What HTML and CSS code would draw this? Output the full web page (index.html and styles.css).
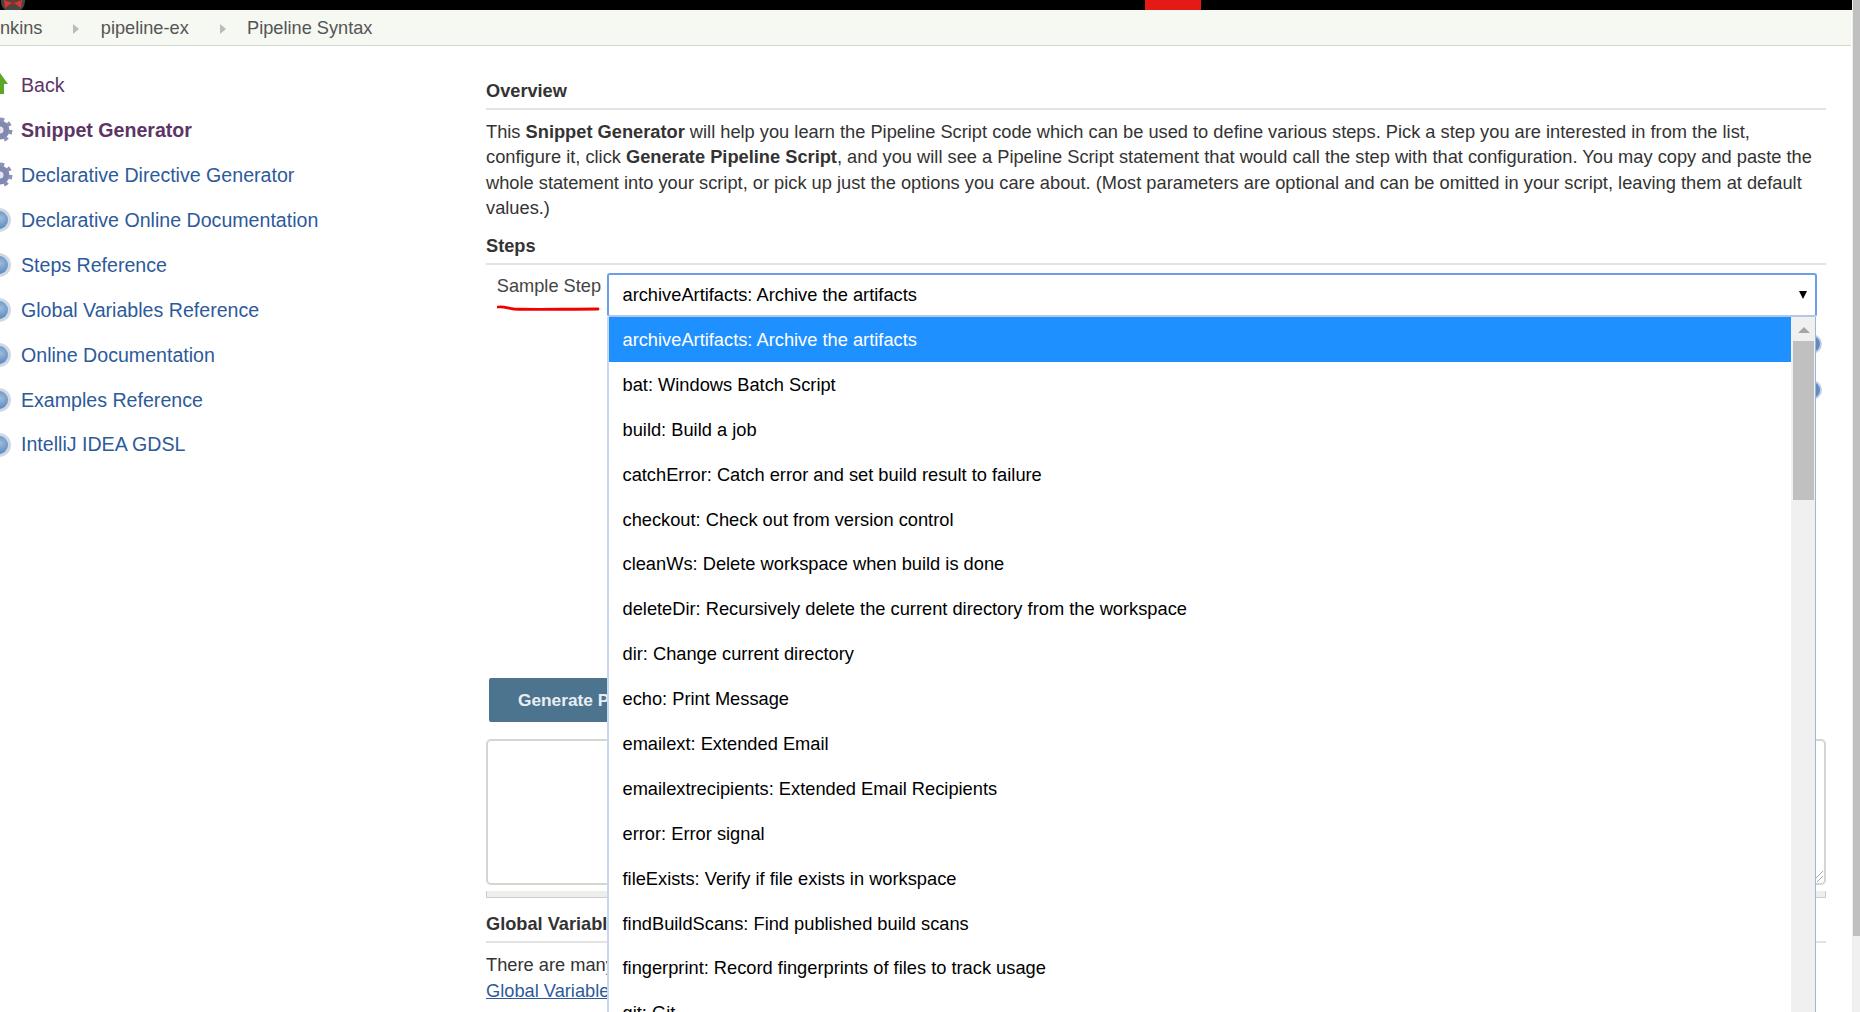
FILE: index.html
```html
<!DOCTYPE html>
<html lang="en">
<head>
<meta charset="utf-8">
<title>Pipeline Syntax</title>
<link rel="stylesheet" href="styles.css">
</head>
<body>
<div class="page">
  <header class="topbar">
    <svg class="logo" width="28" height="10" viewBox="0 0 28 10"><circle cx="13" cy="1" r="12" fill="#4a4544"/><path d="M4 0l8 3-7 5zM22 0l-8 3 7 5z" fill="#d33833"/><circle cx="13" cy="3" r="2" fill="#a82520"/></svg>
    <div class="alert"></div>
  </header>
  <nav class="crumbs">
    <span class="crumb">nkins</span><span class="arrow"></span>
    <span class="crumb">pipeline-ex</span><span class="arrow"></span>
    <span class="crumb">Pipeline Syntax</span>
  </nav>
  <div class="main">
    <aside class="side">
      <a class="task visited"><svg class="ico" viewBox="0 0 13 26" width="13" height="26"><path d="M-8 12L0 1l8 11H4v10H-4V12z" fill="#5aa823"/></svg>Back</a>
      <a class="task visited strong"><svg class="ico" viewBox="0 0 13 26" width="13" height="26"><use href="#gear"/></svg>Snippet Generator</a>
      <a class="task"><svg class="ico" viewBox="0 0 13 26" width="13" height="26"><use href="#gear"/></svg>Declarative Directive Generator</a>
      <a class="task"><svg class="ico" viewBox="0 0 13 26" width="13" height="26"><use href="#help"/></svg>Declarative Online Documentation</a>
      <a class="task"><svg class="ico" viewBox="0 0 13 26" width="13" height="26"><use href="#help"/></svg>Steps Reference</a>
      <a class="task"><svg class="ico" viewBox="0 0 13 26" width="13" height="26"><use href="#help"/></svg>Global Variables Reference</a>
      <a class="task"><svg class="ico" viewBox="0 0 13 26" width="13" height="26"><use href="#help"/></svg>Online Documentation</a>
      <a class="task"><svg class="ico" viewBox="0 0 13 26" width="13" height="26"><use href="#help"/></svg>Examples Reference</a>
      <a class="task"><svg class="ico" viewBox="0 0 13 26" width="13" height="26"><use href="#help"/></svg>IntelliJ IDEA GDSL</a>
    </aside>
    <main class="content">
      <h2 class="sec">Overview</h2>
      <p class="para intro">This <b>Snippet Generator</b> will help you learn the Pipeline Script code which can be used to define various steps. Pick a step you are interested in from the list, configure it, click <b>Generate Pipeline Script</b>, and you will see a Pipeline Script statement that would call the step with that configuration. You may copy and paste the whole statement into your script, or pick up just the options you care about. (Most parameters are optional and can be omitted in your script, leaving them at default values.)</p>
      <h2 class="sec">Steps</h2>
      <div class="step-row">
        <label class="step-label">Sample Step</label>
        <div class="select"><span>archiveArtifacts: Archive the artifacts</span><span class="caret"></span></div>
      </div>
      <div class="gen-wrap"><button class="gen">Generate Pipeline Script</button></div>
      <div class="output">
        <svg class="resizer" width="12" height="12" viewBox="0 0 12 12"><path d="M0 11L11 0M5 11l6-6" stroke="#aaa" stroke-width="1" fill="none"/></svg>
      </div>
      <div class="output-bar"></div>
      <h2 class="sec global">Global Variables</h2>
      <p class="para">There are many features of the Pipeline that are not steps.<br><a class="link">Global Variables Reference</a></p>
      <span class="help h1"></span>
      <span class="help h2"></span>
      <div class="dropdown">
        <ul class="options">
          <li class="opt on">archiveArtifacts: Archive the artifacts</li>
          <li class="opt">bat: Windows Batch Script</li>
          <li class="opt">build: Build a job</li>
          <li class="opt">catchError: Catch error and set build result to failure</li>
          <li class="opt">checkout: Check out from version control</li>
          <li class="opt">cleanWs: Delete workspace when build is done</li>
          <li class="opt">deleteDir: Recursively delete the current directory from the workspace</li>
          <li class="opt">dir: Change current directory</li>
          <li class="opt">echo: Print Message</li>
          <li class="opt">emailext: Extended Email</li>
          <li class="opt">emailextrecipients: Extended Email Recipients</li>
          <li class="opt">error: Error signal</li>
          <li class="opt">fileExists: Verify if file exists in workspace</li>
          <li class="opt">findBuildScans: Find published build scans</li>
          <li class="opt">fingerprint: Record fingerprints of files to track usage</li>
          <li class="opt">git: Git</li>
        </ul>
        <div class="drop-scroll"><span class="up"></span><span class="drop-thumb"></span></div>
      </div>
      <svg class="scribble" width="104" height="8" viewBox="0 0 104 8"><path d="M1 2c5-1 9 1 16 2 20 1 50 0 84 0" fill="none" stroke="#f00000" stroke-width="2.8" stroke-linecap="round"/></svg>
    </main>
  </div>
  <div class="page-scroll"><span class="page-thumb"></span></div>
</div>
<svg class="defs" width="0" height="0">
  <defs>
    <radialGradient id="blue" cx="0.6" cy="0.4" r="0.7"><stop offset="0" stop-color="#9dbbdc"/><stop offset="1" stop-color="#4f80b8"/></radialGradient>
    <g id="gear"><circle cx="0" cy="13" r="9.5" fill="#8289b0"/><circle cx="0" cy="13" r="10.5" fill="none" stroke="#8c92b6" stroke-width="4" stroke-dasharray="4.1 4.1"/><circle cx="0" cy="13" r="3.5" fill="#e4e5ef"/></g>
    <g id="help"><circle cx="-1" cy="13" r="12" fill="#cfd8e4"/><circle cx="-1" cy="13" r="9" fill="url(#blue)"/></g>
  </defs>
</svg>
</body>
</html>
```
FILE: styles.css
```css
* { box-sizing: border-box; }
html, body { margin: 0; padding: 0; height: 100%; overflow: hidden; background: #fff; }
body { font-family: "Liberation Sans", Arial, sans-serif; font-size: 18.2px; color: #333; }
.defs { position: absolute; }
.page { position: relative; width: 1860px; height: 1012px; overflow: hidden; }
.topbar { height: 10px; background: #000; display: flex; position: relative; overflow: hidden; }
.logo { flex: none; }
.alert { position: absolute; left: 1145px; top: 0; width: 56px; height: 10px; background: #e51a17; }
.crumbs { height: 36px; background: #f6f8f2; border-bottom: 1px solid #d3d7cf; display: flex; align-items: center; color: #555; font-size: 18.2px; margin-right: 9px; padding-top: 2px; }
.arrow { width: 0; height: 0; border-left: 6px solid #bbb; border-top: 5.5px solid transparent; border-bottom: 5.5px solid transparent; margin: 0 21.3px 0 31px; }
.main { display: flex; }
.side { width: 486px; flex: none; padding-top: 17px; display: flex; flex-direction: column; }
.task { height: 44.95px; display: flex; align-items: center; gap: 8px; color: #2d5a9a; font-size: 19.6px; }
.task.visited { color: #5c3566; }
.task.strong { font-weight: 700; }
.ico { flex: none; }
.content { width: 1340px; padding-top: 32px; position: relative; flex: none; }
.sec { margin: 0; font-size: 18.2px; line-height: 26px; font-weight: 700; color: #333; border-bottom: 2px solid #e3e3e3; padding-bottom: 4px; }
.para { margin: 9.2px 0 0; font-size: 18.25px; line-height: 25.3px; color: #333; }
.para.intro { padding-right: 12px; }
.para + .sec { margin-top: 12.8px; }
.step-row { display: flex; margin-top: 8px; }
.step-label { width: 121px; padding: 3px 6px 0 0; text-align: right; font-size: 18.2px; line-height: 21px; color: #444; white-space: nowrap; flex: none; }
.select { width: 1210px; height: 44px; border: 2px solid #6d9eeb; border-bottom-color: #b5c6e2; border-radius: 3px; display: flex; align-items: center; justify-content: space-between; padding: 0 8px 0 13.5px; color: #000; font-size: 18.28px; background: #fff; }
.caret { width: 0; height: 0; border-left: 4.5px solid transparent; border-right: 4.5px solid transparent; border-top: 8px solid #000; }
.gen-wrap { margin-top: 361px; padding-left: 3px; }
.gen { width: 250px; height: 44px; background: #4d748f; border: 0; border-radius: 2px; color: #e8eef2; font: 700 17.3px "Liberation Sans", Arial, sans-serif; text-align: left; padding: 0 0 0 29px; display: block; }
.output { margin-top: 17px; height: 146px; border: 2px solid #d3d7cf; border-radius: 5px; position: relative; }
.resizer { position: absolute; right: 0; bottom: 0; }
.output-bar { height: 7px; margin-top: 6px; background: #eeeeec; border: 1px solid #ccc; border-top: 0; }
.sec.global { margin-top: 13px; }
.link { color: #2d5a9a; text-decoration: underline; }
.help { position: absolute; left: 1316px; width: 20px; height: 20px; border-radius: 50%; background: #5f8cc0; border: 2px solid #c3d0e2; }
.h1 { top: 288px; }
.h2 { top: 334px; }
.dropdown { position: absolute; left: 121px; top: 271px; width: 1209px; height: 770px; background: #fff; border-left: 2px solid #c9d7ee; border-right: 1px solid #9fb4e0; display: flex; }
.options { list-style: none; margin: 0; padding: 0; flex: 1; font-size: 18.28px; color: #000; }
.opt { height: 44.9px; line-height: 45.5px; padding-left: 13.5px; white-space: nowrap; }
.opt.on { background: #1e90ff; color: #fff; }
.drop-scroll { width: 24px; flex: none; background: #f0f0f0; display: flex; flex-direction: column; align-items: center; padding: 10px 1px 0 2px; }
.up { width: 0; height: 0; border-left: 6px solid transparent; border-right: 6px solid transparent; border-bottom: 6px solid #a6a6a6; }
.drop-thumb { width: 100%; height: 159px; background: #c0c0c0; margin-top: 8px; }
.scribble { position: absolute; left: 11px; top: 259px; }
.page-scroll { position: absolute; right: 0; top: 0; width: 8px; height: 1012px; background: #f0f0f0; border-left: 1px solid #eee; }
.page-thumb { display: block; height: 936px; background: #c0c0c0; }
```
